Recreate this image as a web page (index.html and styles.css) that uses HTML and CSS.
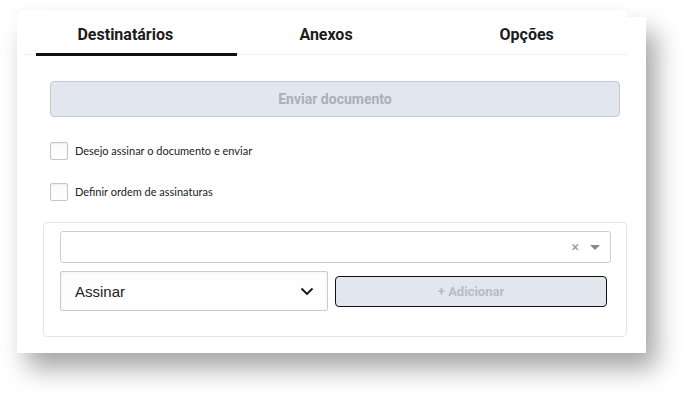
FILE: index.html
```html
<!DOCTYPE html>
<html lang="pt">
<head>
<meta charset="utf-8">
<title>Enviar documento</title>
<link rel="stylesheet" href="styles.css">
</head>
<body>
<div class="stage">
  <div class="panel">
    <div class="tabs">
      <div class="tab active">Destinatários</div>
      <div class="tab">Anexos</div>
      <div class="tab">Opções</div>
    </div>
    <div class="content">
      <button class="send" disabled>Enviar documento</button>
      <label class="check"><span class="box"></span><span class="label">Desejo assinar o documento e enviar</span></label>
      <label class="check second"><span class="box"></span><span class="label">Definir ordem de assinaturas</span></label>
      <div class="card">
        <div class="combo">
          <span class="clear">×</span>
          <span class="caret"></span>
        </div>
        <div class="row">
          <div class="select">
            <span>Assinar</span>
            <svg class="chev" width="14" height="9" viewBox="0 0 14 9"><path d="M1.5 1.5 L7 7 L12.5 1.5" fill="none" stroke="#111" stroke-width="1.8"/></svg>
          </div>
          <button class="add" disabled>+ Adicionar</button>
        </div>
      </div>
    </div>
  </div>
</div>
</body>
</html>
```
FILE: styles.css
```css
html, body {
  margin: 0;
  padding: 0;
  background: #ffffff;
}
body {
  width: 694px;
  height: 401px;
  overflow: hidden;
  font-family: Roboto, "Liberation Sans", sans-serif;
}
.stage {
  padding: 17px 0 0 17px;
}
.panel {
  width: 629px;
  height: 336px;
  background: #fff;
  box-shadow: 10px 15px 24px rgba(0,0,0,0.36);
  box-sizing: border-box;
  padding: 0 19px 0 8px;
  position: relative;
}
.panel::before {
  content: "";
  position: absolute;
  left: 0;
  top: -7px;
  width: 610px;
  height: 10px;
  background: #fff;
  border-radius: 8px 0 0 0;
  box-shadow: -2px -2px 6px rgba(0,0,0,0.03);
}
.tabs {
  display: flex;
  height: 37px;
  border-bottom: 1px solid #eeeeee;
  position: relative;
}
.tab {
  flex: 1;
  display: flex;
  align-items: center;
  justify-content: center;
  font-weight: 700;
  font-size: 16px;
  color: #1c1c1c;
  position: relative;
  padding-bottom: 2px;
}
.tab.active::after {
  content: "";
  position: absolute;
  left: 11px;
  bottom: -2px;
  width: 201px;
  height: 3px;
  background: #111;
}
.content {
  padding: 26px 0 0 0;
  display: flex;
  flex-direction: column;
}
.send {
  margin: 0 7px 0 25px;
  height: 36px;
  border: 1px solid #c5cad2;
  border-radius: 4px;
  background: #e2e6ee;
  color: #a9b0bc;
  font-family: Roboto, "Liberation Sans", sans-serif;
  font-weight: 700;
  font-size: 14px;
}
.check {
  display: flex;
  align-items: center;
  margin: 25px 0 0 25px;
  height: 18px;
}
.check.second {
  margin-top: 23px;
}
.box {
  width: 16px;
  height: 16px;
  border: 1px solid #c6c6c6;
  border-radius: 2px;
  background: linear-gradient(#fafafa, #ffffff);
  box-shadow: inset 0 1px 2px rgba(0,0,0,0.06);
}
.label {
  margin-left: 7px;
  font-family: Lato, "Open Sans", sans-serif;
  font-size: 11px;
  color: #222;
  position: relative;
  top: -1px;
}
.card {
  margin: 21px 0 0 18px;
  border: 1px solid #e6e6e6;
  border-radius: 4px;
  padding: 8px 15px 25px 16px;
}
.combo {
  height: 30px;
  border: 1px solid #cfcfcf;
  border-radius: 3px;
  display: flex;
  align-items: center;
  justify-content: flex-end;
  padding-right: 10px;
}
.clear {
  color: #8a9aa8;
  font-size: 14px;
  margin-right: 11px;
  line-height: 1;
}
.caret {
  width: 0;
  height: 0;
  border-left: 5px solid transparent;
  border-right: 5px solid transparent;
  border-top: 5px solid #888;
}
.row {
  display: flex;
  align-items: center;
  margin-top: 8px;
}
.select {
  width: 268px;
  height: 40px;
  box-sizing: border-box;
  border: 1px solid #c9cbcc;
  border-radius: 2px;
  background: linear-gradient(#fdfdfd, #ffffff);
  box-shadow: inset 0 0 4px rgba(0,0,0,0.06);
  display: flex;
  align-items: center;
  justify-content: space-between;
  padding: 0 13px 0 14px;
  font-family: "Liberation Sans", Arial, sans-serif;
  font-size: 15px;
  color: #222;
}
.add {
  margin-left: 7px;
  width: 272px;
  height: 31px;
  border: 1px solid #111;
  border-radius: 4px;
  background: #e2e6ee;
  color: #b5bdca;
  font-family: Roboto, "Liberation Sans", sans-serif;
  font-weight: 700;
  font-size: 13px;
}
```
